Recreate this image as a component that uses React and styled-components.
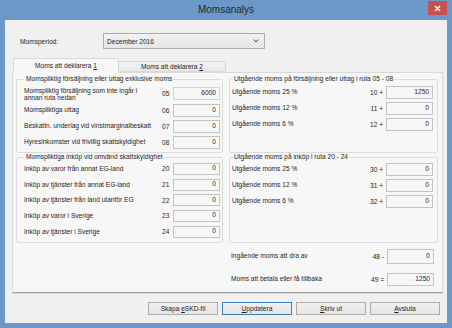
import React from 'react'
import styled, { createGlobalStyle } from 'styled-components'

const GlobalStyle = createGlobalStyle`
  html, body {
    margin: 0;
    padding: 0;
    background: #6b98c9;
  }
  body {
    font-family: "Liberation Sans", Arial, sans-serif;
    font-size: 6.6px;
    color: #1e1e1e;
  }
`

const FONT = `"Liberation Sans", Arial, sans-serif`

const salesRows = [
  { label: ['Momspliktig försäljning som inte ingår i', 'annan ruta nedan'], code: '05', value: '6000' },
  { label: ['Momspliktiga uttag'], code: '06', value: '0' },
  { label: ['Beskattn. underlag vid vinstmarginalbeskatt'], code: '07', value: '0' },
  { label: ['Hyresinkomster vid frivillig skattskyldighet'], code: '08', value: '0' },
]

const purchaseRows = [
  { label: 'Inköp av varor från annat EG-land', code: '20', value: '0' },
  { label: 'Inköp av tjänster från annat EG-land', code: '21', value: '0' },
  { label: 'Inköp av tjänster från land utanför EG', code: '22', value: '0' },
  { label: 'Inköp av varor i Sverige', code: '23', value: '0' },
  { label: 'Inköp av tjänster i Sverige', code: '24', value: '0' },
]

const outSalesRows = [
  { label: 'Utgående moms 25 %', code: '10 +', value: '1250' },
  { label: 'Utgående moms 12 %', code: '11 +', value: '0' },
  { label: 'Utgående moms 6 %', code: '12 +', value: '0' },
]

const outPurchaseRows = [
  { label: 'Utgående moms 25 %', code: '30 +', value: '0' },
  { label: 'Utgående moms 12 %', code: '31 +', value: '0' },
  { label: 'Utgående moms 6 %', code: '32 +', value: '0' },
]

const App = () => (
  <>
    <GlobalStyle />
    <Window>
      <TitleBar>
        <span />
        <Title>Momsanalys</Title>
        <CloseButton aria-label="Stäng">
          <svg width="7" height="7" viewBox="0 0 7 7">
            <path d="M1 1 L6 6 M6 1 L1 6" stroke="#fff" strokeWidth="1.4" />
          </svg>
        </CloseButton>
      </TitleBar>
      <Client>
        <PeriodRow>
          <PeriodLabel>Momsperiod:</PeriodLabel>
          <Select>
            <span>December 2016</span>
            <svg width="6" height="4" viewBox="0 0 6 4">
              <path d="M0.5 0.5 L3 3 L5.5 0.5" fill="none" stroke="#444" strokeWidth="1" />
            </svg>
          </Select>
        </PeriodRow>

        <TabStrip>
          <Tab $active><span>Moms att deklarera <u>1</u></span></Tab>
          <Tab><span>Moms att deklarera <u>2</u></span></Tab>
        </TabStrip>

        <Panel>
          <Columns>
            <Group>
              <Legend>Momspliktig försäljning eller uttag exklusive moms</Legend>
              <RowList $top={2}>
                {salesRows.map(r => (
                  <Row key={r.code} $cols="1fr 11px 47px" $h={r.label.length > 1 ? 17 : 16}>
                    <Label $tight={r.label.length > 1}>
                      {r.label.map(l => <div key={l}>{l}</div>)}
                    </Label>
                    <Code>{r.code}</Code>
                    <Field readOnly value={r.value} $light={r.code === '05'} />
                  </Row>
                ))}
              </RowList>
            </Group>

            <Group $right>
              <Legend>Utgående moms på försäljning eller uttag i ruta 05 - 08</Legend>
              <RowList $top={1}>
                {outSalesRows.map(r => (
                  <Row key={r.code} $cols="1fr 18px 47px" $h={16}>
                    <Label>{r.label}</Label>
                    <Code $right>{r.code}</Code>
                    <Field readOnly value={r.value} />
                  </Row>
                ))}
              </RowList>
            </Group>

            <Group>
              <Legend>Momspliktiga inköp vid omvänd skattskyldighet</Legend>
              <RowList $top={0}>
                {purchaseRows.map(r => (
                  <Row key={r.code} $cols="1fr 11px 47px" $h={15.7}>
                    <Label>{r.label}</Label>
                    <Code>{r.code}</Code>
                    <Field readOnly value={r.value} $short />
                  </Row>
                ))}
              </RowList>
            </Group>

            <Group $right>
              <Legend>Utgående moms på inköp i ruta 20 - 24</Legend>
              <RowList $top={0}>
                {outPurchaseRows.map(r => (
                  <Row key={r.code} $cols="1fr 18px 47px" $h={16}>
                    <Label>{r.label}</Label>
                    <Code $right>{r.code}</Code>
                    <Field readOnly value={r.value} />
                  </Row>
                ))}
              </RowList>
            </Group>

            <Summary>
              <Row $cols="1fr 18px 47px" $h={16}>
                <Label>Ingående moms att dra av</Label>
                <Code $right>48 -</Code>
                <Field readOnly value="0" $tall />
              </Row>
              <Row $cols="1fr 18px 47px" $h={16}>
                <Label>Moms att betala eller få tillbaka</Label>
                <Code $right>49 =</Code>
                <Field readOnly value="1250" />
              </Row>
            </Summary>
          </Columns>
        </Panel>

        <ButtonRow>
          <Button><span>Skapa <u>e</u>SKD-fil</span></Button>
          <Button $focused><span><u>U</u>ppdatera</span></Button>
          <Button><span><u>S</u>kriv ut</span></Button>
          <Button><span><u>A</u>vsluta</span></Button>
        </ButtonRow>
      </Client>
    </Window>
  </>
)

export default App

const Window = styled.div`
  width: 452px;
  height: 328px;
  box-sizing: border-box;
  padding: 0 5px 5px;
  background: #6b98c9;
  display: flex;
  flex-direction: column;
`

const TitleBar = styled.div`
  height: 20px;
  display: grid;
  grid-template-columns: 1fr auto 1fr;
  align-items: start;
`

const Title = styled.div`
  font-family: ${FONT};
  font-size: 10px;
  line-height: 20px;
  color: #1b2a3a;
`

const CloseButton = styled.div`
  justify-self: end;
  width: 19px;
  height: 14px;
  margin-top: 1px;
  background: #c75050;
  display: flex;
  align-items: center;
  justify-content: center;
`

const Client = styled.div`
  flex: 1;
  background: #f0f0f0;
  padding: 13px 4px 0 7px;
  display: flex;
  flex-direction: column;
`

const PeriodRow = styled.div`
  height: 16px;
  display: flex;
  align-items: center;
  padding-left: 8px;
`

const PeriodLabel = styled.div`
  width: 83px;
`

const Select = styled.div`
  width: 162px;
  height: 16px;
  box-sizing: border-box;
  border: 1px solid #acacac;
  background: linear-gradient(#f2f2f2, #e6e6e6);
  display: flex;
  align-items: center;
  justify-content: space-between;
  padding: 0 5px 0 3px;
`

const TabStrip = styled.div`
  margin-top: 9px;
  margin-left: 1px;
  height: 14px;
  display: flex;
  align-items: flex-end;
  position: relative;
  z-index: 1;
`

const Tab = styled.div`
  width: ${p => (p.$active ? 106 : 107)}px;
  height: ${p => (p.$active ? 15 : 11)}px;
  box-sizing: border-box;
  border: 1px solid #d9d9d9;
  border-bottom: ${p => (p.$active ? 'none' : '1px solid #d9d9d9')};
  border-left: ${p => (p.$active ? '1px solid #d9d9d9' : 'none')};
  margin-bottom: ${p => (p.$active ? -1 : 0)}px;
  background: ${p => (p.$active ? '#f7f7f7' : 'linear-gradient(#f2f2f2, #e8e8e8)')};
  display: flex;
  align-items: center;
  justify-content: center;
  padding-bottom: ${p => (p.$active ? 2 : 0)}px;
`

const Panel = styled.div`
  height: 221px;
  box-sizing: border-box;
  border: 1px solid #d9d9d9;
  border-bottom: 1px solid #9a9a9a;
  box-shadow: 0 1px 0 #dadada;
  background: #f7f7f7;
  padding: 2px 4px 0 3px;
`

const Columns = styled.div`
  display: grid;
  grid-template-columns: 207px 209px;
  grid-template-rows: 78px 90px auto;
  column-gap: 6px;
`

const Group = styled.fieldset`
  margin: 0;
  min-width: 0;
  box-sizing: border-box;
  border: 1px solid #dcdcdc;
  border-radius: 2px;
  padding: 0 ${p => (p.$right ? 4 : 2)}px 0 ${p => (p.$right ? 2 : 7)}px;
`

const Legend = styled.legend`
  padding: 0 1px;
  margin-left: 1px;
  line-height: 8px;
  white-space: nowrap;
`

const RowList = styled.div`
  padding-top: ${p => p.$top}px;
  display: flex;
  flex-direction: column;
`

const Row = styled.div`
  height: ${p => p.$h}px;
  display: grid;
  grid-template-columns: ${p => p.$cols};
  align-items: center;
`

const Label = styled.div`
  white-space: nowrap;
  line-height: ${p => (p.$tight ? 7 : 8)}px;
`

const Code = styled.div`
  white-space: nowrap;
  text-align: ${p => (p.$right ? 'right' : 'left')};
  padding-right: ${p => (p.$right ? 3 : 0)}px;
`

const Field = styled.input`
  width: 47px;
  height: ${p => (p.$tall ? 15 : p.$short ? 12 : 13)}px;
  box-sizing: border-box;
  margin: 0;
  border: 1px solid ${p => (p.$light ? '#d4d4d4' : '#c3c3c3')};
  background: #f7f7f7;
  font-family: ${FONT};
  font-size: 6.6px;
  color: #1e1e1e;
  text-align: right;
  padding: 0 3px 2px 0;
  outline: none;
`

const Summary = styled.div`
  grid-column: 2;
  padding: 5px 4px 0 2px;
  display: flex;
  flex-direction: column;
  gap: 7px;
`

const ButtonRow = styled.div`
  margin-top: 9px;
  padding-right: 3px;
  display: flex;
  justify-content: flex-end;
  gap: 4px;
`

const Button = styled.div`
  width: 70px;
  height: 13px;
  box-sizing: border-box;
  border: 1px solid ${p => (p.$focused ? '#3c7fb1' : '#adadad')};
  background: linear-gradient(#f0f0f0, #e5e5e5);
  display: flex;
  align-items: center;
  justify-content: center;
`
